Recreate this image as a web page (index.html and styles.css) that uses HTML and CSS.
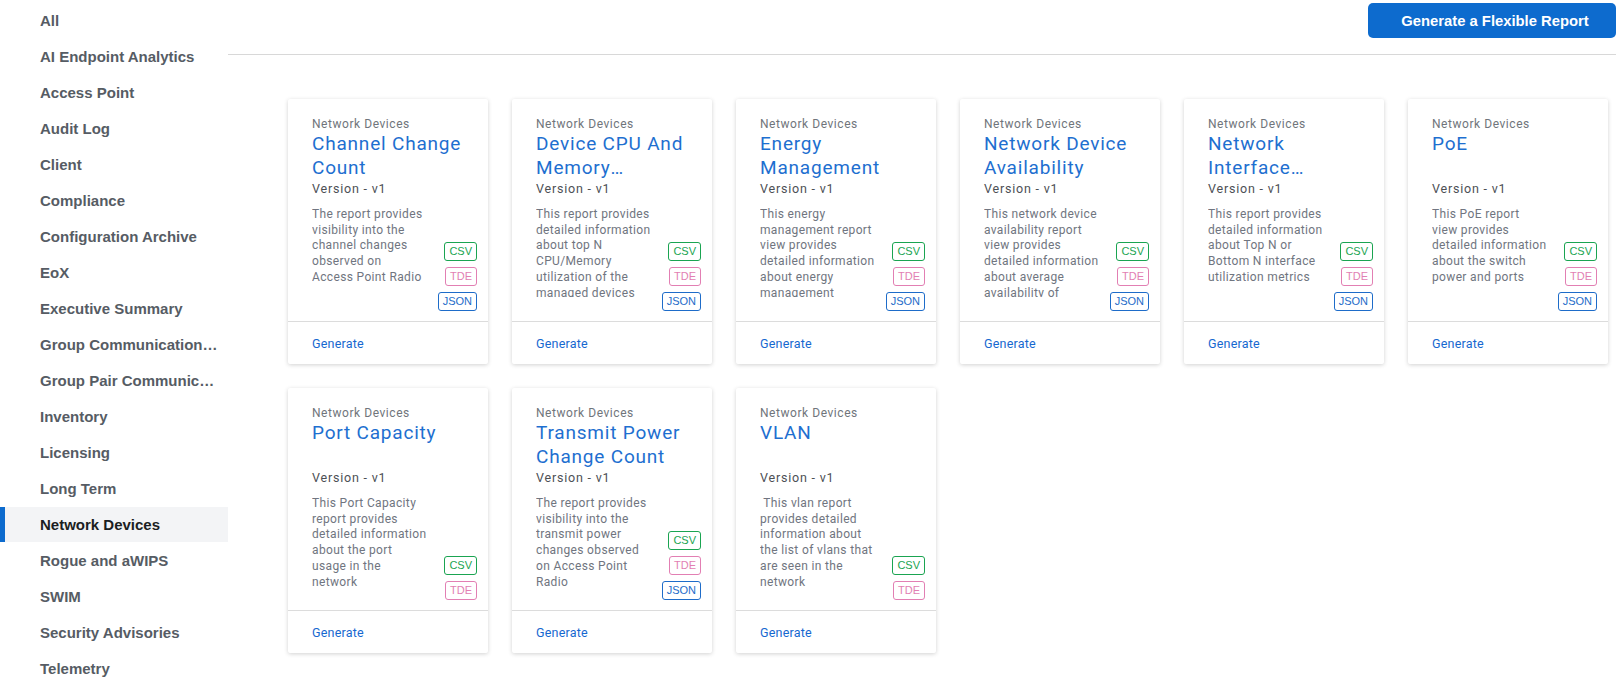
FILE: index.html
```html
<!DOCTYPE html>
<html lang="en">
<head>
<meta charset="utf-8">
<title>Reports</title>
<link rel="stylesheet" href="styles.css">
</head>
<body>
<div class="page">
  <nav class="sidebar">
    <div class="nav-item">All</div>
    <div class="nav-item">AI Endpoint Analytics</div>
    <div class="nav-item">Access Point</div>
    <div class="nav-item">Audit Log</div>
    <div class="nav-item">Client</div>
    <div class="nav-item">Compliance</div>
    <div class="nav-item">Configuration Archive</div>
    <div class="nav-item">EoX</div>
    <div class="nav-item">Executive Summary</div>
    <div class="nav-item">Group Communication Overview</div>
    <div class="nav-item">Group Pair Communication Overview</div>
    <div class="nav-item">Inventory</div>
    <div class="nav-item">Licensing</div>
    <div class="nav-item">Long Term</div>
    <div class="nav-item active">Network Devices</div>
    <div class="nav-item">Rogue and aWIPS</div>
    <div class="nav-item">SWIM</div>
    <div class="nav-item">Security Advisories</div>
    <div class="nav-item">Telemetry</div>
  </nav>
  <main class="main">
    <header class="header">
      <button class="btn-primary">Generate a Flexible Report</button>
    </header>
    <section class="grid">
      <article class="card">
        <div class="card-body">
          <div class="category">Network Devices</div>
          <div class="title">Channel Change Count</div>
          <div class="version">Version - v1</div>
          <div class="content">
            <div class="desc">The report provides visibility into the channel changes observed on<br>Access Point Radio</div>
            <div class="badges"><span class="badge csv">CSV</span><span class="badge tde">TDE</span><span class="badge json">JSON</span></div>
          </div>
        </div>
        <div class="card-footer"><a class="generate">Generate</a></div>
      </article>
      <article class="card">
        <div class="card-body">
          <div class="category">Network Devices</div>
          <div class="title">Device CPU And Memory Utilization</div>
          <div class="version">Version - v1</div>
          <div class="content">
            <div class="desc">This report provides detailed information about top N CPU/Memory utilization of the managed devices</div>
            <div class="badges"><span class="badge csv">CSV</span><span class="badge tde">TDE</span><span class="badge json">JSON</span></div>
          </div>
        </div>
        <div class="card-footer"><a class="generate">Generate</a></div>
      </article>
      <article class="card">
        <div class="card-body">
          <div class="category">Network Devices</div>
          <div class="title">Energy Management</div>
          <div class="version">Version - v1</div>
          <div class="content">
            <div class="desc">This energy management report view provides detailed information about energy management</div>
            <div class="badges"><span class="badge csv">CSV</span><span class="badge tde">TDE</span><span class="badge json">JSON</span></div>
          </div>
        </div>
        <div class="card-footer"><a class="generate">Generate</a></div>
      </article>
      <article class="card">
        <div class="card-body">
          <div class="category">Network Devices</div>
          <div class="title">Network Device Availability</div>
          <div class="version">Version - v1</div>
          <div class="content">
            <div class="desc">This network device availability report view provides detailed information about average availability of network devices</div>
            <div class="badges"><span class="badge csv">CSV</span><span class="badge tde">TDE</span><span class="badge json">JSON</span></div>
          </div>
        </div>
        <div class="card-footer"><a class="generate">Generate</a></div>
      </article>
      <article class="card">
        <div class="card-body">
          <div class="category">Network Devices</div>
          <div class="title">Network Interface Utilization</div>
          <div class="version">Version - v1</div>
          <div class="content">
            <div class="desc">This report provides detailed information about Top N or Bottom N interface utilization metrics</div>
            <div class="badges"><span class="badge csv">CSV</span><span class="badge tde">TDE</span><span class="badge json">JSON</span></div>
          </div>
        </div>
        <div class="card-footer"><a class="generate">Generate</a></div>
      </article>
      <article class="card">
        <div class="card-body">
          <div class="category">Network Devices</div>
          <div class="title">PoE</div>
          <div class="version">Version - v1</div>
          <div class="content">
            <div class="desc">This PoE report view provides detailed information about the switch power and ports</div>
            <div class="badges"><span class="badge csv">CSV</span><span class="badge tde">TDE</span><span class="badge json">JSON</span></div>
          </div>
        </div>
        <div class="card-footer"><a class="generate">Generate</a></div>
      </article>
      <article class="card">
        <div class="card-body">
          <div class="category">Network Devices</div>
          <div class="title">Port Capacity</div>
          <div class="version">Version - v1</div>
          <div class="content">
            <div class="desc">This Port Capacity report provides detailed information about the port usage in the network</div>
            <div class="badges"><span class="badge csv">CSV</span><span class="badge tde">TDE</span></div>
          </div>
        </div>
        <div class="card-footer"><a class="generate">Generate</a></div>
      </article>
      <article class="card">
        <div class="card-body">
          <div class="category">Network Devices</div>
          <div class="title">Transmit Power Change Count</div>
          <div class="version">Version - v1</div>
          <div class="content">
            <div class="desc">The report provides visibility into the transmit power changes observed on Access Point Radio</div>
            <div class="badges"><span class="badge csv">CSV</span><span class="badge tde">TDE</span><span class="badge json">JSON</span></div>
          </div>
        </div>
        <div class="card-footer"><a class="generate">Generate</a></div>
      </article>
      <article class="card">
        <div class="card-body">
          <div class="category">Network Devices</div>
          <div class="title">VLAN</div>
          <div class="version">Version - v1</div>
          <div class="content">
            <div class="desc">&nbsp;This vlan report provides detailed information about the list of vlans that are seen in the network</div>
            <div class="badges"><span class="badge csv">CSV</span><span class="badge tde">TDE</span></div>
          </div>
        </div>
        <div class="card-footer"><a class="generate">Generate</a></div>
      </article>
    </section>
  </main>
</div>
</body>
</html>
```
FILE: styles.css
```css
* { box-sizing: border-box; }
html, body { margin: 0; padding: 0; background: #ffffff; }
body { font-family: "Liberation Sans", Arial, sans-serif; overflow: hidden; }
.page { display: flex; width: 1618px; height: 690px; }
.sidebar { width: 228px; flex: none; padding-top: 3px; }
.nav-item {
  height: 36px;
  line-height: 36px;
  padding: 0 8px 0 40px;
  font-size: 15px;
  font-weight: 700;
  color: #565c64;
  white-space: nowrap;
  overflow: hidden;
  text-overflow: ellipsis;
}
.nav-item.active {
  background: #f3f4f6;
  color: #1b1e22;
  box-shadow: inset 5px 0 0 #0d6bce;
  height: 35px;
  margin-bottom: 1px;
}
.main { flex: 1; margin-right: 2px; }
.header {
  height: 55px;
  padding-top: 3px;
  display: flex;
  justify-content: flex-end;
  align-items: flex-start;
  border-bottom: 1px solid #d8d8d8;
}
.btn-primary {
  height: 35px;
  width: 248px;
  border: 0;
  border-radius: 5px;
  background: #0d6bce;
  color: #ffffff;
  font-family: "Liberation Sans", Arial, sans-serif;
  font-size: 14.8px;
  font-weight: 700;
  padding: 0 0 0 6px;
}
.grid {
  display: grid;
  grid-template-columns: repeat(6, 200px);
  column-gap: 24px;
  row-gap: 24px;
  padding: 44px 0 0 60px;
}
.card {
  height: 265px;
  background: #ffffff;
  border-radius: 2px;
  box-shadow: 0 1px 4px rgba(0, 0, 0, 0.18);
  display: flex;
  flex-direction: column;
  font-family: Roboto, "Noto Sans", sans-serif;
}
.card-body {
  height: 222px;
  padding: 17px 11px 10px 24px;
  display: flex;
  flex-direction: column;
}
.category {
  font-size: 12px;
  line-height: 16px;
  color: #70757b;
  letter-spacing: 0.55px;
}
.title {
  width: 158px;
  font-size: 19px;
  line-height: 24px;
  height: 48px;
  color: #1e6fd0;
  letter-spacing: 0.8px;
  display: -webkit-box;
  -webkit-line-clamp: 2;
  -webkit-box-orient: vertical;
  overflow: hidden;
}
.version {
  font-size: 12.5px;
  line-height: 18px;
  color: #4c5055;
  letter-spacing: 0.8px;
}
.content {
  flex: 1;
  margin-top: 9px;
  display: flex;
  justify-content: space-between;
}
.desc {
  width: 116px;
  max-height: 90px;
  overflow: hidden;
  font-size: 12px;
  line-height: 15.7px;
  color: #707580;
  letter-spacing: 0.35px;
}
.badges {
  display: flex;
  flex-direction: column;
  align-items: flex-end;
  justify-content: flex-end;
  gap: 6px;
}
.badge {
  display: block;
  height: 19px;
  line-height: 17px;
  padding: 0 4px;
  border: 1px solid;
  border-radius: 3px;
  font-family: "Liberation Sans", Arial, sans-serif;
  font-size: 11px;
  text-align: center;
}
.badge.csv { color: #1aa451; border-color: #1aa451; min-width: 30px; }
.badge.tde { color: #e27fb3; border-color: #e27fb3; min-width: 29px; }
.badge.json { color: #1e6cc9; border-color: #1e6cc9; min-width: 38px; }
.card-footer {
  flex: 1;
  border-top: 1px solid #dcdcdc;
  padding-left: 24px;
  display: flex;
  align-items: center;
}
.generate {
  font-size: 12.5px;
  color: #1668d0;
  letter-spacing: 0.2px;
  cursor: pointer;
}
```
